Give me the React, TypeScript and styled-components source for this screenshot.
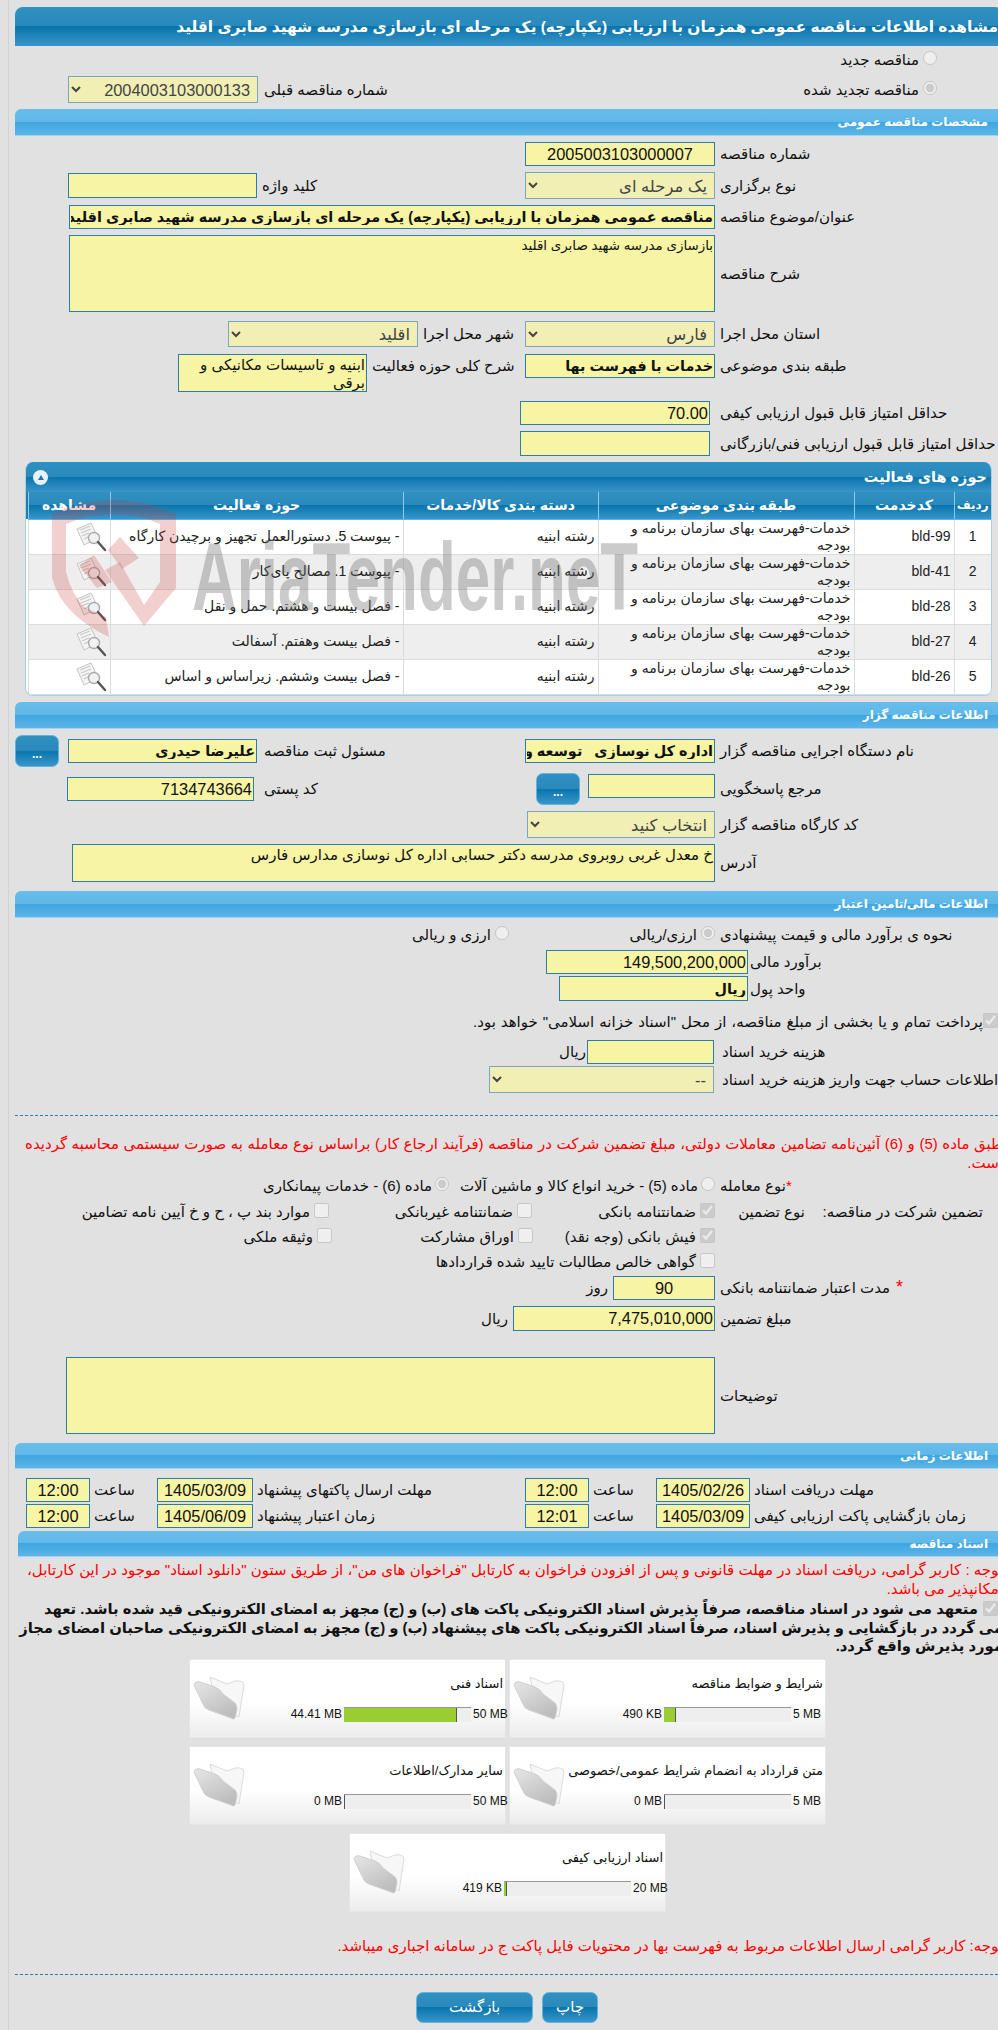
import React from "react";
import styled, { createGlobalStyle, css } from "styled-components";

const FONT = `"Liberation Sans", "DejaVu Sans", sans-serif`;

const Global = createGlobalStyle`
  html, body { margin: 0; padding: 0; width: 998px; height: 2030px; overflow: hidden; background: #e1e1e1; }
  body { font-family: ${FONT}; font-size: 15px; color: #111; }
  * { box-sizing: border-box; }
`;

const Shell = styled.div`
  margin-left: 8px;
  height: 2030px;
  width: 995px;
  padding: 7px 0 0 6px;
  border-left: 1px solid #d2d2d2;
  direction: rtl;
`;

const blueGradient = `linear-gradient(#2f90c2 0%, #2b89ba 49%, #0875ac 50%, #3a95ca 100%)`;

const TitleBar = styled.div`
  height: 39px;
  display: flex;
  align-items: center;
  padding-right: 5px;
  white-space: nowrap;
  border-radius: 8px 8px 0 0;
  color: #fff;
  font-weight: bold;
  font-size: 15.4px;
  background: ${blueGradient};
`;

const SectionBar = styled.div<{ $h?: number; $mt?: number; $ml?: number }>`
  height: ${(p) => p.$h ?? 27}px;
  margin-top: ${(p) => p.$mt ?? 0}px;
  margin-left: ${(p) => p.$ml ?? 0}px;
  display: flex;
  align-items: center;
  padding-right: 15px;
  border-radius: 6px 6px 0 0;
  color: #fff;
  font-weight: bold;
  font-size: 12px;
  background: linear-gradient(#68bdeb 0%, #5fb8e8 48%, #3ea6e1 50%, #5cb5e7 100%);
  border-bottom: 1px solid #9fd3ef;
`;

const Row = styled.div<{ $mt?: number; $h?: number; $gap?: number; $pr?: number; $top?: boolean }>`
  display: flex;
  margin-top: ${(p) => p.$mt ?? 0}px;
  height: ${(p) => p.$h ?? 24}px;
  gap: ${(p) => p.$gap ?? 5}px;
  padding-right: ${(p) => p.$pr ?? 0}px;
  align-items: ${(p) => (p.$top ? "flex-start" : "center")};
  white-space: nowrap;
`;

const SplitRow = styled(Row)`
  justify-content: space-between;
  padding-left: 53px;
`;

const Label = styled.label<{ $w: number; $pl?: number }>`
  flex: none;
  width: ${(p) => p.$w}px;
  padding-left: ${(p) => p.$pl ?? 0}px;
  text-align: left;
  line-height: 24px;
  font-size: 15px;
  white-space: nowrap;
`;

const Inline = styled.span<{ $mr?: number; $w?: number }>`
  flex: none;
  margin-right: ${(p) => p.$mr ?? 0}px;
  ${(p) => (p.$w ? `width: ${p.$w}px;` : "")}
`;

const fieldBase = css<{ $w: number; $h?: number; $bold?: boolean; $center?: boolean }>`
  flex: none;
  width: ${(p) => p.$w}px;
  height: ${(p) => p.$h ?? 24}px;
  background: #f7f4a3;
  border: 1px solid #2b7dab;
  margin: 0;
  padding: 0 1px;
  color: #111;
  font-family: ${FONT};
  font-weight: ${(p) => (p.$bold ? "bold" : "normal")};
  text-align: ${(p) => (p.$center ? "center" : "right")};
  direction: rtl;
  outline: none;
`;

const Field = styled.input<{ $w: number; $h?: number; $bold?: boolean; $center?: boolean; $dy?: number }>`
  ${fieldBase};
  font-size: ${(p) => (p.$bold ? 14.4 : 16.4)}px;
  ${(p) => (p.$dy ? `margin-top: ${p.$dy}px; align-self: flex-start;` : "")}
`;

const Area = styled.textarea<{ $w: number; $h?: number; $bold?: boolean; $center?: boolean; $fs?: number }>`
  ${fieldBase};
  display: block;
  font-size: ${(p) => p.$fs ?? 15}px;
  line-height: 18px;
  resize: none;
  overflow: hidden;
  padding: 1px 1px 0;
`;

const Picker = styled.select<{ $w: number; $h?: number }>`
  flex: none;
  width: ${(p) => p.$w}px;
  height: ${(p) => p.$h ?? 27}px;
  margin: 0;
  background-color: #f1efb4;
  border: 1px solid #7aa6c2;
  border-radius: 0;
  color: #444;
  opacity: 1;
  font-family: ${FONT};
  font-size: 16.4px;
  direction: rtl;
  padding: 0 3px;
`;

const Radio = styled.input.attrs({ type: "radio", disabled: true })`
  flex: none;
  width: 14px;
  height: 14px;
  margin: 0 0 4px;
`;

const Check = styled.input.attrs({ type: "checkbox", disabled: true })`
  flex: none;
  width: 15px;
  height: 15px;
  margin: 0 0 4px;
`;

const OptionItem = styled.span<{ $w?: number; $gap?: number; $ws?: number }>`
  flex: none;
  display: inline-flex;
  align-items: center;
  gap: ${(p) => p.$gap ?? 4}px;
  width: ${(p) => (p.$w ? `${p.$w}px` : "auto")};
  font-size: 15px;
  word-spacing: ${(p) => p.$ws ?? 0}px;
`;

const Star = styled.span`
  color: #f00;
`;

const LabelStar = styled(Star)`
  margin-left: 6px;
  font-size: 18px;
  line-height: 12px;
`;

const Panel = styled.section`
  position: relative;
  margin: 6px 11px 0 10px;
  height: 234px;
  background: #fff;
  border: 1px solid #a7cfe6;
  border-top: 0;
  border-radius: 8px;
  overflow: hidden;
`;

const PanelHead = styled.div`
  height: 30px;
  display: flex;
  align-items: center;
  justify-content: space-between;
  padding: 0 4px 0 7px;
  color: #fff;
  font-weight: bold;
  font-size: 14.5px;
  background: ${blueGradient};
`;

const Collapse = styled.span`
  width: 15px;
  height: 15px;
  border-radius: 50%;
  background: #e8f2f8;
  display: flex;
  align-items: center;
  justify-content: center;
  &::before {
    content: "";
    border: 3px solid transparent;
    border-top: 0;
    border-bottom: 5px solid #1a77a9;
  }
`;

const Table = styled.table`
  width: 963px;
  border-collapse: collapse;
  table-layout: fixed;
`;

const Th = styled.th<{ $fs?: number }>`
  height: 27px;
  padding: 0;
  color: #fff;
  font-size: ${(p) => p.$fs ?? 14}px;
  font-weight: bold;
  white-space: nowrap;
  border-left: 1px solid #8fcbe9;
  background: ${blueGradient};
  border-bottom: 1px solid #5db5e4;
  &:last-child {
    box-shadow: -3px 0 0 #1b80b5;
  }
`;

const Tr = styled.tr<{ $alt?: boolean }>`
  background: ${(p) => (p.$alt ? "#eeeeee" : "#fff")};
`;

const Td = styled.td<{ $c?: boolean }>`
  height: 35px;
  padding: 0 3px;
  border-left: 1px solid #dcdcdc;
  border-bottom: 1px solid #dcdcdc;
  line-height: 17px;
  font-size: 14px;
  text-align: ${(p) => (p.$c ? "center" : "right")};
  color: #222;
`;

const IconSlot = styled.span`
  display: block;
  height: 30px;
`;

const Watermark = styled.div`
  position: absolute;
  left: 26px;
  top: 38px;
  width: 620px;
  height: 150px;
  pointer-events: none;
  direction: ltr;
`;

const WatermarkText = styled.span`
  position: absolute;
  left: 140px;
  top: 27px;
  font-family: "Liberation Sans", sans-serif;
  font-weight: bold;
  font-size: 96px;
  line-height: 100px;
  color: rgba(110, 110, 110, 0.36);
  white-space: nowrap;
  transform: scaleX(0.645);
  transform-origin: left top;
`;

const Dashed = styled.hr<{ $mt: number }>`
  border: 0;
  border-top: 1px dashed #2b7dab;
  margin: ${(p) => p.$mt}px 0 0;
`;

const Note = styled.p<{ $mt: number; $pl: number; $ws?: number }>`
  margin: ${(p) => p.$mt}px 0 0;
  padding-left: ${(p) => p.$pl}px;
  color: #f00;
  font-size: 15px;
  line-height: 19px;
  word-spacing: ${(p) => p.$ws ?? 0}px;
`;

const Pledge = styled.p`
  margin: 2px 0 0;
  padding-left: 3px;
  font-weight: bold;
  font-size: 14.8px;
  line-height: 18.5px;
`;

const PledgeCheck = styled(Check)`
  margin: 0 5px;
  vertical-align: -2px;
`;

const CardGrid = styled.div`
  width: 637px;
  margin: 3px 177px 0 0;
  display: flex;
  flex-wrap: wrap;
  justify-content: center;
  gap: 8px 3px;
`;

const Card = styled.div`
  width: 317px;
  height: 79px;
  display: flex;
  background: linear-gradient(#fff 0%, #fff 55%, #ececec 100%);
  border: 1px solid #e6e6e6;
  box-shadow: 0 0 1px #ddd;
`;

const CardBody = styled.div`
  flex: 1;
  min-width: 0;
  padding: 14px 2px 0 0;
`;

const CardTitle = styled.div`
  font-size: 13px;
  line-height: 20px;
  height: 20px;
  white-space: nowrap;
`;

const CardBar = styled.div`
  margin-top: 13px;
  direction: ltr;
  display: flex;
  align-items: center;
  justify-content: flex-end;
  gap: 2px;
  font-size: 12px;
  color: #111;
  white-space: nowrap;
`;

const Track = styled.div`
  width: 127px;
  height: 15px;
  flex: none;
  background: #eeeeee;
  border-top: 1px solid #999;
`;

const Fill = styled.div`
  height: 100%;
  background: #9acd32;
  border-right: 1px solid #555;
`;

const BarEnd = styled.span`
  width: 30px;
  text-align: left;
  flex: none;
`;

const FolderBox = styled.div`
  flex: none;
  width: 58px;
  padding: 12px 0 0 3px;
  display: flex;
  justify-content: flex-end;
`;

const Actions = styled.div`
  margin: 17px 405px 0 0;
  display: flex;
  gap: 9px;
`;

const blueBtn = css`
  flex: none;
  border: 1px solid #5db5e4;
  border-radius: 7px;
  color: #fff;
  font-family: ${FONT};
  background: ${blueGradient};
  padding: 0;
`;

const ActionBtn = styled.button<{ $w: number }>`
  ${blueBtn};
  width: ${(p) => p.$w}px;
  height: 31px;
  font-size: 15px;
`;

const DotsBtn = styled.button<{ $mr?: number }>`
  ${blueBtn};
  width: 44px;
  height: 32px;
  margin-right: ${(p) => p.$mr ?? 0}px;
  font-weight: bold;
  font-size: 12px;
  padding-top: 6px;
`;

const Folder = () => (
  <svg width="54" height="48" viewBox="0 0 54 48">
    <defs>
      <linearGradient id="fg" x1="0" y1="0" x2="0.6" y2="1">
        <stop offset="0" stopColor="#e6e6e6" />
        <stop offset="1" stopColor="#bdbdbd" />
      </linearGradient>
    </defs>
    <path d="M17 5 L34 12 L42 9 Q51 8 51 13 L46 45 L22 30 Z" fill="#f7f7f7" stroke="#dcdcdc" />
    <path d="M1 13 Q2 9 7 10 L22 15 Q27 17 30 22 L42 31 Q44 33 44 37 L42 46 Q41 48 38 46 L16 38 Q11 36 10 32 Z" fill="url(#fg)" stroke="#cfcfcf" />
  </svg>
);

const ViewIcon = () => (
  <svg width="31" height="30" viewBox="0 0 31 30">
    <path d="M1 7 L15 1 L22 16 L8 23 Z" fill="#f4f4f4" stroke="#c4c4c4" />
    <path d="M4 8 L14 4 M5 11 L15 7 M6 14 L13 11 M8 17 L12 15" stroke="#c8c8c8" strokeWidth="1.3" />
    <circle cx="18" cy="16" r="5.5" fill="#eef2f4" stroke="#aaaaaa" strokeWidth="1.4" />
    <path d="M22 20 L29 28" stroke="#555" strokeWidth="2.4" strokeLinecap="round" />
  </svg>
);

const Shield = () => (
  <svg width="150" height="150" viewBox="0 0 150 150" style={{ position: "absolute", left: 0, top: 0 }}>
    <g fill="rgba(205, 60, 60, 0.24)">
      <path d="M0 14 Q62 -14 124 14 L124 88 L92 126 L53 70 L68 62 L92 105 L108 82 L108 24 Q62 4 14 24 L14 72 Q20 95 32 107 L54 117 L57 137 Q10 115 0 78 Z" />
      <path d="M68 37 L87 58 L70 69 L56 50 Z" />
      <path d="M27 66 L42 55 L60 82 L45 88 Z" />
    </g>
  </svg>
);

const rows = [
  ["1", "bld-99", "- پیوست 5. دستورالعمل تجهیز و برچیدن کارگاه"],
  ["2", "bld-41", "- پیوست 1. مصالح پای‌کار"],
  ["3", "bld-28", "- فصل بیست و هشتم. حمل و نقل"],
  ["4", "bld-27", "- فصل بیست وهفتم. آسفالت"],
  ["5", "bld-26", "- فصل بیست وششم. زیراساس و اساس"],
];

const cards = [
  { title: "شرایط و ضوابط مناقصه", used: "490 KB", max: "5 MB", pct: 9.8 },
  { title: "اسناد فنی", used: "44.41 MB", max: "50 MB", pct: 88.8 },
  { title: "متن قرارداد به انضمام شرایط عمومی/خصوصی", used: "0 MB", max: "5 MB", pct: 0 },
  { title: "سایر مدارک/اطلاعات", used: "0 MB", max: "50 MB", pct: 0 },
  { title: "اسناد ارزیابی کیفی", used: "419 KB", max: "20 MB", pct: 2 },
];

export default function App() {
  return (
    <>
      <Global />
      <Shell>
        <TitleBar>مشاهده اطلاعات مناقصه عمومی همزمان با ارزیابی (یکپارچه) یک مرحله ای بازسازی مدرسه شهید صابری اقلید</TitleBar>

        <Row $mt={4} $h={20} $pr={66}>
          <OptionItem><Radio name="kind" />مناقصه جدید</OptionItem>
        </Row>
        <SplitRow $mt={6} $h={27} $pr={66}>
          <OptionItem><Radio name="kind" defaultChecked />مناقصه تجدید شده</OptionItem>
          <Row $h={27} $gap={6}>
            <Label $w={126}>شماره مناقصه قبلی</Label>
            <Picker $w={190}><option>2004003103000133</option></Picker>
          </Row>
        </SplitRow>

        <SectionBar $mt={6}>مشخصات مناقصه عمومی</SectionBar>

        <Row $mt={6}>
          <Label $w={283}>شماره مناقصه</Label>
          <Field $w={190} $center readOnly value="2005003103000007" />
        </Row>
        <Row $mt={6} $h={27}>
          <Label $w={283}>نوع برگزاری</Label>
          <Picker $w={190}><option>یک مرحله ای</option></Picker>
          <Label $w={258}>کلید واژه</Label>
          <Field $w={189} $h={25} readOnly value="" />
        </Row>
        <Row $mt={6}>
          <Label $w={283}>عنوان/موضوع مناقصه</Label>
          <Field $w={646} $bold readOnly value="مناقصه عمومی همزمان با ارزیابی (یکپارچه) یک مرحله ای بازسازی مدرسه شهید صابری اقلید" />
        </Row>
        <Row $mt={6} $h={77}>
          <Label $w={283}>شرح مناقصه</Label>
          <Area $w={646} $h={77} $fs={13.4} readOnly value="بازسازی مدرسه شهید صابری اقلید" />
        </Row>
        <Row $mt={9} $h={26}>
          <Label $w={283}>استان محل اجرا</Label>
          <Picker $w={190} $h={26}><option>فارس</option></Picker>
          <Label $w={97}>شهر محل اجرا</Label>
          <Picker $w={190} $h={26}><option>اقلید</option></Picker>
        </Row>
        <Row $mt={7} $h={38} $top>
          <Label $w={283}>طبقه بندی موضوعی</Label>
          <Field $w={190} $bold readOnly value="خدمات با فهرست بها" />
          <Label $w={148}>شرح کلی حوزه فعالیت</Label>
          <Area $w={189} $h={38} readOnly value="ابنیه و تاسیسات مکانیکی و برقی" />
        </Row>
        <Row $mt={9}>
          <Label $w={288} $pl={5}>حداقل امتیاز قابل قبول ارزیابی کیفی</Label>
          <Field $w={190} readOnly value="70.00" />
        </Row>
        <Row $mt={6} $h={25}>
          <Label $w={288} $pl={5}>حداقل امتیاز قابل قبول ارزیابی فنی/بازرگانی</Label>
          <Field $w={190} $h={25} readOnly value="" />
        </Row>

        <Panel>
          <PanelHead>
            <span>حوزه های فعالیت</span>
            <Collapse />
          </PanelHead>
          <Table>
            <colgroup>
              <col width="37" />
              <col width="100" />
              <col width="256" />
              <col width="195" />
              <col width="293" />
              <col width="82" />
            </colgroup>
            <thead>
              <tr>
                <Th $fs={12}>ردیف</Th>
                <Th>کدخدمت</Th>
                <Th>طبقه بندی موضوعی</Th>
                <Th>دسته بندی کالا/خدمات</Th>
                <Th>حوزه فعالیت</Th>
                <Th>مشاهده</Th>
              </tr>
            </thead>
            <tbody>
              {rows.map((r, i) => (
                <Tr key={r[0]} $alt={i % 2 === 1}>
                  <Td $c>{r[0]}</Td>
                  <Td>{r[1]}</Td>
                  <Td>خدمات-فهرست بهای سازمان برنامه و بودجه</Td>
                  <Td>رشته ابنیه</Td>
                  <Td>{r[2]}</Td>
                  <Td><IconSlot><ViewIcon /></IconSlot></Td>
                </Tr>
              ))}
            </tbody>
          </Table>
          <Watermark>
            <Shield />
            <WatermarkText>AriaTender.neT</WatermarkText>
          </Watermark>
        </Panel>

        <SectionBar $mt={6}>اطلاعات مناقصه گزار</SectionBar>

        <Row $mt={6} $h={32}>
          <Label $w={283}>نام دستگاه اجرایی مناقصه گزار</Label>
          <Field $w={190} $bold readOnly value="اداره کل نوسازی   توسعه و تجهیز مدارس" />
          <Label $w={258} $pl={2}>مسئول ثبت مناقصه</Label>
          <Field $w={189} $bold readOnly value="علیرضا حیدری" />
          <DotsBtn $mr={4}>...</DotsBtn>
        </Row>
        <Row $mt={6} $h={32}>
          <Label $w={283}>مرجع پاسخگویی</Label>
          <Field $w={127} $dy={1} readOnly value="" />
          <DotsBtn $mr={3}>...</DotsBtn>
          <Label $w={272} $pl={5}>کد پستی</Label>
          <Field $w={187} readOnly value="7134743664" />
        </Row>
        <Row $mt={6} $h={27}>
          <Label $w={283}>کد کارگاه مناقصه گزار</Label>
          <Picker $w={188}><option>انتخاب کنید</option></Picker>
        </Row>
        <Row $mt={6} $h={38}>
          <Label $w={283}>آدرس</Label>
          <Area $w={643} $h={38} readOnly value="خ معدل غربی روبروی مدرسه دکتر حسابی اداره کل نوسازی مدارس فارس" />
        </Row>

        <SectionBar $mt={9}>اطلاعات مالی/تامین اعتبار</SectionBar>

        <Row $mt={7} $h={20}>
          <Label $w={283}>نحوه ی برآورد مالی و قیمت پیشنهادی</Label>
          <OptionItem $w={201}><Radio name="cur" defaultChecked />ارزی/ریالی</OptionItem>
          <OptionItem><Radio name="cur" />ارزی و ریالی</OptionItem>
        </Row>
        <Row $mt={5} $gap={0}>
          <Label $w={255} $pl={2}>برآورد مالی</Label>
          <Field $w={202} readOnly value="149,500,200,000" />
        </Row>
        <Row $mt={2} $h={25} $gap={0}>
          <Label $w={255} $pl={2}>واحد پول</Label>
          <Field $w={189} $h={25} $bold readOnly value="ریال" />
        </Row>
        <Row $mt={11} $h={20} $pr={5} $gap={0}>
          <OptionItem $gap={0} $ws={0.8}><Check defaultChecked />پرداخت تمام و یا بخشی از مبلغ مناقصه، از محل "اسناد خزانه اسلامی" خواهد بود.</OptionItem>
        </Row>
        <Row $mt={8}>
          <Label $w={284} $pl={3}>هزینه خرید اسناد</Label>
          <Field $w={127} readOnly value="" />
          <Inline $mr={-4}>ریال</Inline>
        </Row>
        <Row $mt={2} $h={27}>
          <Label $w={284} $pl={3}>اطلاعات حساب جهت واریز هزینه خرید اسناد</Label>
          <Picker $w={225}><option>--</option></Picker>
        </Row>

        <Dashed $mt={22} />
        <Note $mt={18} $pl={8} $ws={0.4}>طبق ماده (5) و (6) آئین‌نامه تضامین معاملات دولتی، مبلغ تضمین شرکت در مناقصه (فرآیند ارجاع کار) براساس نوع معامله به صورت سیستمی محاسبه گردیده است.</Note>

        <Row $mt={4} $h={20}>
          <Label $w={283}><Star>*</Star>نوع معامله</Label>
          <OptionItem $gap={3} $w={261}><Radio name="deal" />ماده (5) - خرید انواع کالا و ماشین آلات</OptionItem>
          <OptionItem $gap={3}><Radio name="deal" defaultChecked />ماده (6) - خدمات پیمانکاری</OptionItem>
        </Row>
        <Row $mt={6} $h={20} $pr={20} $gap={0}>
          <Inline $w={178}>تضمین شرکت در مناقصه:</Inline>
          <Inline $w={90}>نوع تضمین</Inline>
          <OptionItem $w={183}><Check defaultChecked />ضمانتنامه بانکی</OptionItem>
          <OptionItem $w={203}><Check />ضمانتنامه غیربانکی</OptionItem>
          <OptionItem><Check />موارد بند پ ، ح و خ آیین نامه تضامین</OptionItem>
        </Row>
        <Row $mt={5} $h={20} $pr={288} $gap={0}>
          <OptionItem $w={182}><Check defaultChecked />فیش بانکی (وجه نقد)</OptionItem>
          <OptionItem $w={201}><Check />اوراق مشارکت</OptionItem>
          <OptionItem><Check />وثیقه ملکی</OptionItem>
        </Row>
        <Row $mt={5} $h={20} $pr={288} $gap={0}>
          <OptionItem><Check />گواهی خالص مطالبات تایید شده قراردادها</OptionItem>
        </Row>
        <Row $mt={4}>
          <Label $w={283}><LabelStar>*</LabelStar>مدت اعتبار ضمانتنامه بانکی</Label>
          <Field $w={102} $center readOnly value="90" />
          <Inline>روز</Inline>
        </Row>
        <Row $mt={6} $h={25}>
          <Label $w={283}>مبلغ تضمین</Label>
          <Field $w={202} $h={25} readOnly value="7,475,010,000" />
          <Inline>ریال</Inline>
        </Row>
        <Row $mt={26} $h={77}>
          <Label $w={283}>توضیحات</Label>
          <Area $w={649} $h={77} readOnly value="" />
        </Row>

        <SectionBar $mt={9} $h={26}>اطلاعات زمانی</SectionBar>

        <Row $mt={9} $gap={4}>
          <Label $w={249}>مهلت دریافت اسناد</Label>
          <Field $w={94} $center readOnly value="1405/02/26" />
          <Label $w={59}>ساعت</Label>
          <Field $w={64} $center readOnly value="12:00" />
          <Label $w={264}>مهلت ارسال پاکتهای پیشنهاد</Label>
          <Field $w={96} $center readOnly value="1405/03/09" />
          <Label $w={59}>ساعت</Label>
          <Field $w={64} $center readOnly value="12:00" />
        </Row>
        <Row $mt={2} $gap={4}>
          <Label $w={249}>زمان بازگشایی پاکت ارزیابی کیفی</Label>
          <Field $w={94} $center readOnly value="1405/03/09" />
          <Label $w={59}>ساعت</Label>
          <Field $w={64} $center readOnly value="12:01" />
          <Label $w={264}>زمان اعتبار پیشنهاد</Label>
          <Field $w={96} $center readOnly value="1405/06/09" />
          <Label $w={59}>ساعت</Label>
          <Field $w={64} $center readOnly value="12:00" />
        </Row>

        <SectionBar $mt={3} $h={26} $ml={3}>اسناد مناقصه</SectionBar>

        <Note $mt={3} $pl={8}>توجه : کاربر گرامی، دریافت اسناد در مهلت قانونی و پس از افزودن فراخوان به کارتابل "فراخوان های من"، از طریق ستون "دانلود اسناد" موجود در این کارتابل، امکانپذیر می باشد.</Note>
        <Pledge>
          <PledgeCheck defaultChecked />
          متعهد می شود در اسناد مناقصه، صرفاً پذیرش اسناد الکترونیکی پاکت های (ب) و (ج) مجهز به امضای الکترونیکی قید شده باشد. تعهد می گردد در بازگشایی و پذیرش اسناد، صرفاً اسناد الکترونیکی پاکت های پیشنهاد (ب) و (ج) مجهز به امضای الکترونیکی صاحبان امضای مجاز مورد پذیرش واقع گردد.
        </Pledge>

        <CardGrid>
          {cards.map((c) => (
            <Card key={c.title}>
              <CardBody>
                <CardTitle>{c.title}</CardTitle>
                <CardBar>
                  <span>{c.used}</span>
                  <Track><Fill style={{ width: `${c.pct}%` }} /></Track>
                  <BarEnd>{c.max}</BarEnd>
                </CardBar>
              </CardBody>
              <FolderBox><Folder /></FolderBox>
            </Card>
          ))}
        </CardGrid>

        <Note $mt={24} $pl={0}>توجه: کاربر گرامی ارسال اطلاعات مربوط به فهرست بها در محتویات فایل پاکت ج در سامانه اجباری میباشد.</Note>
        <Dashed $mt={19} />
        <Actions>
          <ActionBtn $w={56}>چاپ</ActionBtn>
          <ActionBtn $w={117}>بازگشت</ActionBtn>
        </Actions>
      </Shell>
    </>
  );
}
